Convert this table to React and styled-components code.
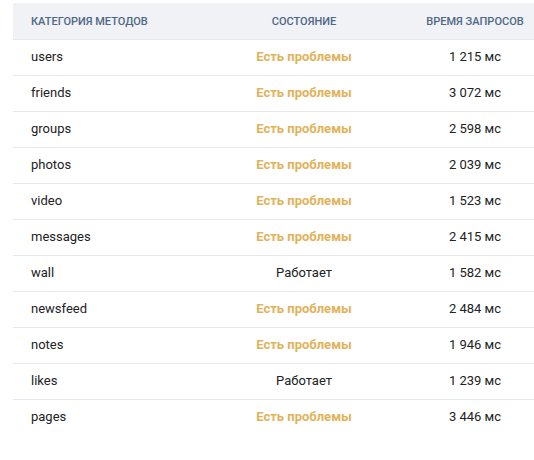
import styled, { createGlobalStyle } from "styled-components";

const GlobalStyle = createGlobalStyle`
  body {
    margin: 0;
    background: #fff;
    font-family: Roboto, "Noto Sans", sans-serif;
  }
`;

const rows = [
  ["users", false, "1 215 мс"],
  ["friends", false, "3 072 мс"],
  ["groups", false, "2 598 мс"],
  ["photos", false, "2 039 мс"],
  ["video", false, "1 523 мс"],
  ["messages", false, "2 415 мс"],
  ["wall", true, "1 582 мс"],
  ["newsfeed", false, "2 484 мс"],
  ["notes", false, "1 946 мс"],
  ["likes", true, "1 239 мс"],
  ["pages", false, "3 446 мс"],
];

const App = () => {
  return (
    <Wrapper>
      <GlobalStyle />
      <Table>
        <HeadRow>
          <Cell>Категория методов</Cell>
          <Cell $center>Состояние</Cell>
          <Cell $center>Время запросов</Cell>
        </HeadRow>
        {rows.map(([name, ok, time]) => (
          <Row key={name}>
            <Cell>{name}</Cell>
            <Status $ok={ok}>{ok ? "Работает" : "Есть проблемы"}</Status>
            <Cell $center>{time}</Cell>
          </Row>
        ))}
      </Table>
    </Wrapper>
  );
};

const Wrapper = styled.main`
  padding: 3px 0 0 13px;
`;

const Table = styled.section`
  display: flex;
  flex-direction: column;
`;

const Row = styled.div`
  display: grid;
  grid-template-columns: 1fr 120px 118px;
  column-gap: 52px;
  align-items: center;
  box-sizing: border-box;
  height: 36px;
  padding: 0 0 2px 18px;
  font-size: 13px;
  color: #222;
  & + & {
    border-top: 1px solid #e7e8ec;
  }
`;

const HeadRow = styled(Row)`
  padding-bottom: 0;
  background: #f0f2f5;
  font-size: 11px;
  font-weight: 500;
  text-transform: uppercase;
  color: #4f6785;
`;

const Cell = styled.div`
  text-align: ${(p) => (p.$center ? "center" : "left")};
  white-space: nowrap;
`;

const Status = styled(Cell).attrs({ $center: true })`
  font-weight: ${(p) => (p.$ok ? 400 : 700)};
  color: ${(p) => (p.$ok ? "#222" : "#e2b25a")};
`;

export default App;
